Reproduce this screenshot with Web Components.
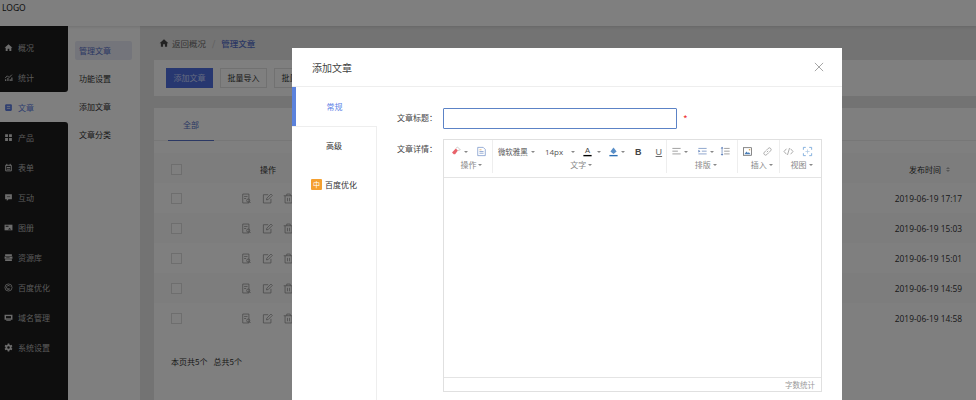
<!DOCTYPE html>
<html>
<head>
<meta charset="utf-8">
<title>文章管理</title>
<style>
  html, body { margin: 0; height: 100%; overflow: hidden; }
  body { font: 8px "Noto Sans CJK SC", "Noto Sans", sans-serif; color: #333; }
</style>
</head>
<body>
<app-shell>
  <article-page></article-page>
</app-shell>
<article-dialog></article-dialog>

<script>
  (function (customElements) {
    'use strict';

    const ICONS = {
      home: '<path fill="currentColor" d="M8 2 1 8.500h2V14h3.500v-4h3v4H13V8.500h2z"/>',
      chart: '<path fill="none" stroke="currentColor" stroke-width="1.600" d="M2 9l4-4 3 3 5-5"/><path fill="currentColor" d="M2 11h2v3H2zM6 9h2v5H6zM10 11h2v3h-2zM13 8h2v6h-2z"/>',
      doc: '<rect x="2" y="2" width="12" height="12" rx="2" fill="currentColor"/><path stroke="#fff" stroke-width="1.300" d="M5 6h6M5 9.500h6"/>',
      grid: '<path fill="currentColor" d="M2 2h5v5H2zM9 2h5v5H9zM2 9h5v5H2zM9 9h5v5H9z"/>',
      form: '<path fill="none" stroke="currentColor" stroke-width="1.700" d="M3 4h10v10H3z"/><path stroke="currentColor" stroke-width="1.700" d="M5 1.500V5M11 1.500V5M5 8h6M5 11h6"/>',
      chat: '<path fill="currentColor" d="M2 2h12v9H8l-3 3v-3H2z"/><path stroke="#222" d="M5 6.500h6"/>',
      album: '<path fill="currentColor" d="M1 3h14v10H1z"/><path fill="#222" d="M3 5h5v1.500H3zM10 9l3 2.500H7z"/>',
      stack: '<path fill="currentColor" d="M2 2h12v3.400H2zM1 6.400h14V10H1zM2 11h12v3H2z"/><path stroke="#222" d="M4 8.200h6"/>',
      baidu: '<circle cx="8" cy="8" r="6.300" fill="none" stroke="currentColor" stroke-width="1.300"/><path fill="none" stroke="currentColor" stroke-width="1.300" d="M11 6.500a3.400 3.400 0 1 0-1 4H6"/>',
      monitor: '<path fill="currentColor" d="M1 3h14v9H1zM4 13h8v1.400H4z"/><path fill="#222" d="M3.500 5.500h9v4h-9z"/>',
      gear: '<path fill="currentColor" fill-rule="evenodd" d="M6.600 1h2.800l.4 2 1.700 1 2-.7 1.400 2.400-1.600 1.400v1.800l1.600 1.400-1.400 2.400-2-.7-1.700 1-.4 2H6.600l-.4-2-1.700-1-2 .7L1.100 10.300l1.600-1.400V7.100L1.100 5.700l1.400-2.400 2 .7 1.700-1zM8 5.700a2.300 2.300 0 1 0 0 4.600 2.300 2.300 0 0 0 0-4.600z"/>',
      view: '<path fill="none" stroke="currentColor" d="M2.500 1.500h9v13h-9zM4.500 5h5M4.500 8h3"/><circle cx="10.500" cy="11" r="2.300" fill="none" stroke="currentColor"/><path stroke="currentColor" d="M12 12.600l2 2"/>',
      edit: '<path fill="none" stroke="currentColor" d="M13 8.500v6H2v-12h7"/><path fill="none" stroke="currentColor" d="M6.500 10l.5-2.500L13 1.500l2 2-6 6z"/>',
      trash: '<path fill="none" stroke="currentColor" d="M1 4h14M5.500 4V1.500h5V4M3 4v10.500h10V4M6.500 7v5M9.500 7v5"/>',
      eraser: '<path fill="#e8626a" d="M1.500 9.500 7 3.500l3 3-4 5.500H4z"/><path fill="none" stroke="#bbb" d="M7 3.500l2.500-2 4 4-3.500 1.200"/>',
      file: '<path fill="none" stroke="#6d8cc4" d="M2.500 2h8l3 3v9h-11z"/><path stroke="#6d8cc4" d="M5 8h6M5 10.500h6"/><path stroke="#d99a4a" d="M5 5.500h3"/>',
      fontcolor: '<text x="8" y="10.500" font-size="11" text-anchor="middle" fill="#444" font-family="Liberation Sans">A</text><path stroke="#000" stroke-width="2" d="M2 14h12"/>',
      fill: '<path fill="#5a8fc8" d="M8 2l4.500 6-4.500 3.500L3.500 8z"/><path stroke="#2d6fb3" stroke-width="2" d="M2 14h12"/>',
      alignl: '<path stroke="#777" d="M2 3.500h12M2 7.500h8M2 11.500h12"/>',
      indent: '<path stroke="#5d7fb8" d="M2 3.500h12M7 7.500h7M2 11.500h12"/><path fill="#5d7fb8" d="M2 5.500l3 2-3 2z"/>',
      lineh: '<path stroke="#777" d="M6 3.500h8M6 7.500h8M6 11.500h8"/><path stroke="#5d7fb8" d="M3 2v11"/><path fill="#5d7fb8" d="M3 1l2 2.500H1zM3 14l2-2.500H1z"/>',
      image: '<rect x="2" y="2.500" width="12" height="11" fill="none" stroke="#555"/><path fill="#4b7fb8" d="M3.500 12l3-4 2 2.200 1.500-1.200 2.500 3z"/><circle cx="11" cy="5.500" r="1.200" fill="#d9a24a"/>',
      link: '<path fill="none" stroke="#888" d="M7 9l2-2M6 6.500 3.500 9a2.400 2.400 0 0 0 3.500 3.500L9.500 10M10 9.500 12.500 7A2.400 2.400 0 0 0 9 3.500L6.500 6"/>',
      code: '<path fill="none" stroke="#888" d="M5 4 1.500 8 5 12M11 4l3.500 4L11 12M9.500 3l-3 10"/>',
      full: '<path fill="none" stroke="#6fa3d8" stroke-width="1.200" d="M2 5.500V2h3.500M10.500 2H14v3.500M14 10.500V14h-3.500M5.500 14H2v-3.500"/><path stroke="#a9c6e4" d="M5 8h6M8 5v6"/>',
      close: '<path fill="none" stroke="#888" d="M2.500 2.500l11 11M13.500 2.500l-11 11"/>'
    };

    class UiIcon extends HTMLElement {
      constructor() {
        super();
        const size = this.getAttribute('size') || 14;
        const shadowRoot = this.attachShadow({mode: 'open'});
        shadowRoot.innerHTML = `
          <style>
            :host { display: inline-flex; flex: none; width: ${size}px; height: ${size}px; }
            svg { width: 100%; height: 100%; display: block; }
          </style>
          <svg viewBox="0 0 16 16">${ICONS[this.getAttribute('name')] || ''}</svg>`;
      }
    }
    customElements.define('ui-icon', UiIcon);

    class AppShell extends HTMLElement {
      constructor() {
        super();
        const shadowRoot = this.attachShadow({mode: 'open'});
        shadowRoot.innerHTML = `
          <style>
            :host { display: flex; flex-direction: column; height: 400px; background: #fff; }
            header { height: 26px; flex: none; padding-left: 2px; line-height: 16px; font-size: 8.5px; color: #222;
              font-family: "Noto Sans", sans-serif; box-shadow: 0 1px 3px rgba(0,0,0,.12); position: relative; }
            .body { display: flex; flex: 1; min-height: 0; }
          </style>
          <header>LOGO</header>
          <div class="body">
            <side-nav></side-nav>
            <sub-nav></sub-nav>
            <slot></slot>
          </div>`;
      }
    }
    customElements.define('app-shell', AppShell);

    class SideNav extends HTMLElement {
      constructor() {
        super();
        const items = [['home','概况'],['chart','统计'],['doc','文章'],['grid','产品'],['form','表单'],['chat','互动'],
          ['album','图册'],['stack','资源库'],['baidu','百度优化'],['monitor','域名管理'],['gear','系统设置']];
        const shadowRoot = this.attachShadow({mode: 'open'});
        shadowRoot.innerHTML = `
          <style>
            :host { display: flex; flex-direction: column; width: 68px; flex: none; background: #fff; }
            .top, .bottom { background: #1c1c1c; }
            .top { height: 66px; padding-top: 6px; box-sizing: border-box; border-bottom-right-radius: 3px; }
            .bottom { flex: 1; border-top-right-radius: 3px; }
            .item { display: flex; align-items: center; gap: 5px; height: 30px; padding-left: 4px; color: #d8d8d8; font-size: 8px; }
            .item span { color: #b4b4b4; }
            .on .item, .on .item span { color: #5c7ce0; }
          </style>
          <div class="top">${items.slice(0, 2).map(this.row).join('')}</div>
          <div class="on">${this.row(items[2])}</div>
          <div class="bottom">${items.slice(3).map(this.row).join('')}</div>`;
      }

      row(item) {
        return `<div class="item"><ui-icon name="${item[0]}" size="9"></ui-icon><span>${item[1]}</span></div>`;
      }
    }
    customElements.define('side-nav', SideNav);

    class SubNav extends HTMLElement {
      constructor() {
        super();
        const shadowRoot = this.attachShadow({mode: 'open'});
        shadowRoot.innerHTML = `
          <style>
            :host { display: block; width: 72px; flex: none; padding: 15px 8px 0 7px; box-sizing: border-box; background: #fff; font-size: 8px; }
            div { height: 19px; line-height: 19px; margin-bottom: 9px; padding-left: 4px; color: #333; border-radius: 2px; white-space: nowrap; }
            .on { background: #e9ebf6; color: #5670c8; }
          </style>
          <div class="on">管理文章</div><div>功能设置</div><div>添加文章</div><div>文章分类</div>`;
      }
    }
    customElements.define('sub-nav', SubNav);

    class ArticlePage extends HTMLElement {
      constructor() {
        super();
        const times = ['17:17', '15:03', '15:01', '14:59', '14:58'];
        const rows = times.map((t, i) => `
          <div class="row ${i % 2 ? 'alt' : ''}">
            <span class="check"></span>
            <span class="ops"><ui-icon name="view" size="11"></ui-icon><ui-icon name="edit" size="11"></ui-icon><ui-icon name="trash" size="11"></ui-icon></span>
            <span class="time">2019-06-19 ${t}</span>
          </div>`).join('');
        const shadowRoot = this.attachShadow({mode: 'open'});
        shadowRoot.innerHTML = `
          <style>
            :host { display: flex; flex-direction: column; flex: 1; min-width: 0; background: #e6e6e6; padding-left: 14px; font-size: 8px; color: #333; }
            .crumb { height: 34px; display: flex; align-items: center; color: #666; padding-left: 5px; font-size: 8.5px; }
            .crumb ui-icon { color: #444; margin-right: 3px; }
            .crumb i { font-style: normal; color: #bbb; margin: 0 6px; }
            .crumb b { font-weight: 500; color: #5670c8; }
            .tools { height: 36px; background: #fff; display: flex; align-items: center; gap: 7px; padding-left: 12px; flex: none; }
            .btn { height: 20px; line-height: 18px; width: 47px; text-align: center; box-sizing: border-box; border: 1px solid #e2e2e2; color: #333; white-space: nowrap; overflow: hidden; }
            .btn.main { background: #4f6fe0; border-color: #4f6fe0; color: #c8d4ff; }
            .card { flex: 1; margin-top: 12px; background: #fff; }
            .tabs { height: 33px; border-bottom: 1px solid #eee; padding-left: 14px; box-sizing: border-box; }
            .tabs span { display: inline-block; width: 46px; height: 33px; line-height: 34px; text-align: center; color: #5670c8; border-bottom: 1.5px solid #5670c8; box-sizing: border-box; }
            .head, .row { display: flex; align-items: center; height: 30px; padding: 0 14px 0 17px; box-sizing: border-box; }
            .head { margin-top: 12px; padding-top: 2px; background: #fbfbfb; }
            .alt { background: #fafafa; }
            .check { width: 11px; height: 11px; border: 1px solid #ddd; background: #fff; flex: none; box-sizing: border-box; }
            .ops { margin-left: 59px; display: flex; gap: 10px; color: #888; }
            .head .ops { color: #333; justify-content: center; width: 56px; margin-left: 58px; }
            .time { margin-left: auto; font-family: "Open Sans", sans-serif; font-size: 8.4px; color: #333; white-space: nowrap; }
            .head .time { font-family: inherit; font-size: 8px; display: flex; align-items: center; margin-right: 12px; }
            .sort { margin-left: 5px; display: flex; flex-direction: column; gap: 1px; }
            .sort i { width: 0; height: 0; border: 2px solid transparent; }
            .sort i:first-child { border-bottom: 2.5px solid #aaa; border-top: 0; }
            .sort i:last-child { border-top: 2.5px solid #aaa; border-bottom: 0; }
            .foot { margin: 23px 0 0 17px; }
            .foot span { margin-right: 6px; }
          </style>
          <nav class="crumb"><ui-icon name="home" size="10"></ui-icon><span>返回概况</span><i>/</i><b>管理文章</b></nav>
          <div class="tools"><span class="btn main">添加文章</span><span class="btn">批量导入</span><span class="btn">批量导出</span></div>
          <section class="card">
            <div class="tabs"><span>全部</span></div>
            <div class="head"><span class="check"></span><span class="ops">操作</span><span class="time">发布时间<span class="sort"><i></i><i></i></span></span></div>
            ${rows}
            <div class="foot"><span>本页共5个</span><span>总共5个</span></div>
          </section>`;
      }
    }
    customElements.define('article-page', ArticlePage);

    class EditorToolbar extends HTMLElement {
      constructor() {
        super();
        const arrow = ml => `<span class="a" style="margin-left:${ml}px"></span>`;
        const ico = (name, ml) => `<ui-icon name="${name}" size="11" style="margin-left:${ml}px"></ui-icon>`;
        const shadowRoot = this.attachShadow({mode: 'open'});
        shadowRoot.innerHTML = `
          <style>
            :host { display: flex; height: 38px; box-sizing: border-box; border-bottom: 1px solid #e4e4e4; color: #555; font-size: 7.5px; white-space: nowrap; }
            .grp { display: flex; flex-direction: column; border-right: 1px solid #eee; padding-top: 4px; box-sizing: border-box; height: 33px; }
            .line { display: flex; align-items: center; height: 15px; }
            .cap { color: #888; line-height: 10px; font-size: 8px; margin-top: 1px; display: flex; align-items: center; justify-content: center; }
            .a { display: inline-block; flex: none; width: 0; height: 0; border: 2px solid transparent; border-top: 2.5px solid #888; border-bottom: 0; }
            .g1 { width: 49px; } .g2 { width: 175px; } .g3 { width: 71px; } .g4 { width: 42px; } .g5 { width: 41px; border: 0; }
            .g1 .cap { padding-left: 7px; } .g2 .cap { padding-left: 3px; } .g3 .cap { padding-left: 7px; } .g4 .cap { padding-left: 6px; } .g5 .cap { padding-left: 2px; }
            b { font: 700 9px "Liberation Sans", sans-serif; margin-left: 10px; color: #444; }
            u { font: 9px "Liberation Sans", sans-serif; margin-left: 14px; color: #666; }
            .px { font: 8px "Open Sans", sans-serif; margin-left: 10px; }
          </style>
          <div class="grp g1"><div class="line">${ico('eraser', 7)}${arrow(2)}${ico('file', 8)}</div><div class="cap">操作${arrow(2)}</div></div>
          <div class="grp g2"><div class="line"><span style="margin-left:5px">微软雅黑</span>${arrow(3)}<span class="px">14px</span>${arrow(8)}${ico('fontcolor', 7)}${arrow(4)}${ico('fill', 7)}${arrow(2)}<b>B</b><u>U</u></div><div class="cap">文字${arrow(2)}</div></div>
          <div class="grp g3"><div class="line">${ico('alignl', 4)}${arrow(2)}${ico('indent', 9)}${arrow(2)}${ico('lineh', 6)}</div><div class="cap">排版${arrow(2)}</div></div>
          <div class="grp g4"><div class="line">${ico('image', 4)}${ico('link', 9)}</div><div class="cap">插入${arrow(2)}</div></div>
          <div class="grp g5"><div class="line">${ico('code', 3)}${ico('full', 8)}</div><div class="cap">视图${arrow(2)}</div></div>`;
      }
    }
    customElements.define('editor-toolbar', EditorToolbar);

    class ArticleDialog extends HTMLElement {
      constructor() {
        super();
        const shadowRoot = this.attachShadow({mode: 'open'});
        shadowRoot.innerHTML = `
          <style>
            :host { position: fixed; inset: 0; background: rgba(0,0,0,.5); display: block; font-size: 8px; color: #333; overflow: hidden; }
            .dlg { position: absolute; left: 292px; top: 48px; width: 550px; height: 360px; background: #fff; display: flex; flex-direction: column; }
            .title { height: 39px; flex: none; border-bottom: 1px solid #eee; box-sizing: border-box; display: flex; align-items: center; justify-content: space-between; padding: 0 17px 0 20px; font-size: 10px; color: #444; }
            .main { display: flex; flex: 1; min-height: 0; }
            .tabs { width: 85px; flex: none; display: flex; flex-direction: column; }
            .tab { height: 39px; display: flex; align-items: center; justify-content: center; gap: 3px; border-right: 1px solid #eee; box-sizing: border-box; color: #333; }
            .tab.on { background: #fff; color: #5c83e6; border-right: 0; border-left: 4px solid #5b82dc; padding-right: 4px; }
            .tab:nth-child(2) { border-top: 1px solid #eee; padding-bottom: 1px; }
            .rest { flex: 1; border-right: 1px solid #eee; }
            .zh { width: 11px; height: 11px; background: #f5a030; color: #fff; font-size: 7px; line-height: 11px; text-align: center; border-radius: 1px; }
            .form { flex: 1; padding: 21px 20px 0 20px; min-width: 0; }
            .field { display: flex; }
            .field label { width: 46px; flex: none; color: #444; line-height: 20px; white-space: nowrap; }
            .input { width: 234px; height: 21px; box-sizing: border-box; border: 1px solid #5c83c6; border-radius: 1px; }
            .star { color: #e33; margin-left: 6px; font-size: 10px; line-height: 21px; }
            .editor { width: 379px; height: 253px; border: 1px solid #e0e0e0; box-sizing: border-box; display: flex; flex-direction: column; }
            .area { flex: 1; }
            .count { height: 14px; line-height: 13px; border-top: 1px solid #e4e4e4; text-align: right; padding-right: 6px; color: #999; font-size: 7.5px; box-sizing: border-box; }
          </style>
          <div class="dlg">
            <div class="title"><span>添加文章</span><ui-icon name="close" size="12"></ui-icon></div>
            <div class="main">
              <div class="tabs">
                <div class="tab on">常规</div>
                <div class="tab">高级</div>
                <div class="tab"><span class="zh">中</span>百度优化</div>
                <div class="rest"></div>
              </div>
              <div class="form">
                <div class="field" style="margin-bottom:10px"><label>文章标题：</label><div class="input"></div><span class="star">*</span></div>
                <div class="field"><label>文章详情：</label>
                  <div class="editor"><editor-toolbar></editor-toolbar><div class="area"></div><div class="count">字数统计</div></div>
                </div>
              </div>
            </div>
          </div>`;
      }
    }
    customElements.define('article-dialog', ArticleDialog);
  })(window.customElements);
</script>
</body>
</html>
